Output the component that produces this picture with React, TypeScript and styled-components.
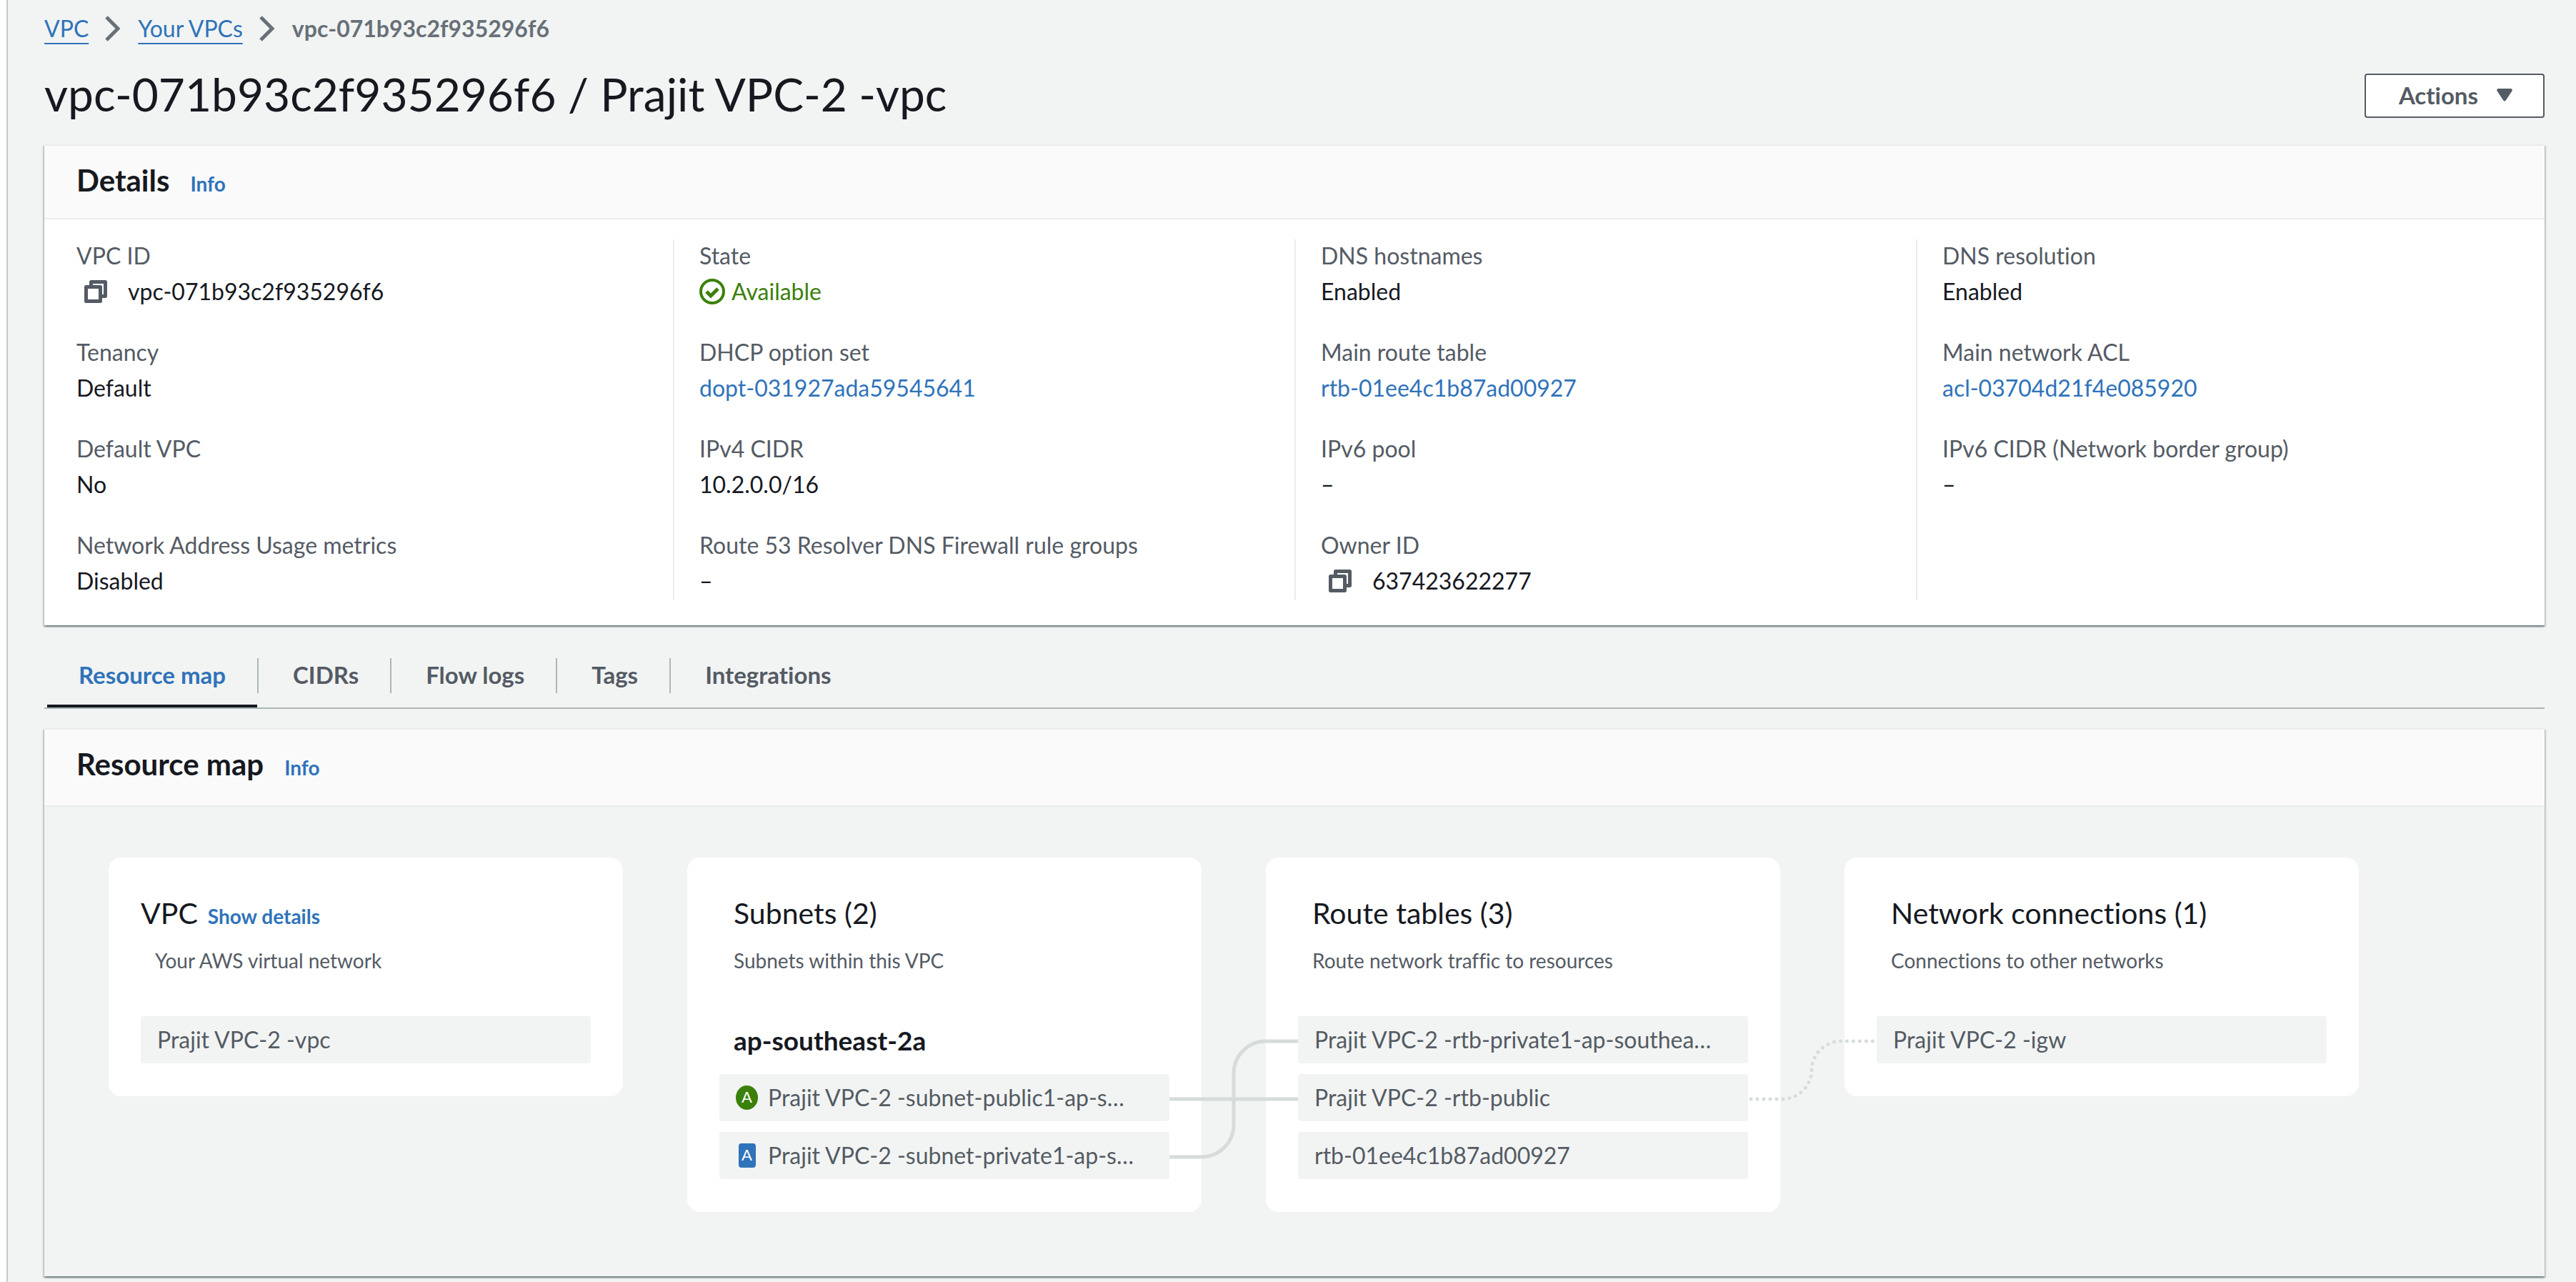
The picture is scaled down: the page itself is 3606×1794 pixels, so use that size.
import React from "react";
import styled, { createGlobalStyle } from "styled-components";

const color = {
  page: "#f2f4f3",
  white: "#ffffff",
  header: "#fafafa",
  divider: "#e9edec",
  rule: "#aab7b7",
  ink: "#16191f",
  muted: "#545b64",
  crumb: "#687078",
  link: "#2f73ba",
  green: "#3b800a",
  wire: "#d6dcdb",
};

const GlobalStyle = createGlobalStyle`
  *, *::before, *::after { box-sizing: border-box; }
  body {
    margin: 0;
    background: ${color.page};
    color: ${color.ink};
    font-family: Lato, "Noto Sans", sans-serif;
    font-size: 32px;
    line-height: 46px;
    font-variant-ligatures: none;
  }
  h1, h2, h3, h4, p, ul, ol, dl, dd { margin: 0; padding: 0; }
  ul, ol { list-style: none; }
  button { font: inherit; cursor: pointer; }
`;

/* ---------- shell ---------- */

const Shell = styled.div`
  display: flex;
  min-height: 100vh;
`;

const DrawerEdge = styled.div`
  flex: 0 0 11px;
  background: ${color.white};
  border-right: 2px solid #c3cbcb;
`;

const Main = styled.main`
  flex: 1;
  min-width: 0;
  padding: 15px 44px 7px 51px;
`;

const Link = styled.a`
  color: ${color.link};
  text-decoration: none;
`;

/* ---------- breadcrumbs and title ---------- */

const Crumbs = styled.ol`
  display: flex;
  align-items: center;
  line-height: 50px;
`;

const Crumb = styled.li`
  display: flex;
  align-items: center;
`;

const CrumbLink = styled(Link)`
  text-decoration: underline;
  text-decoration-thickness: 2px;
  text-underline-offset: 8px;
  text-decoration-skip-ink: none;
`;

const CurrentCrumb = styled.span`
  color: ${color.crumb};
  font-weight: 700;
`;

const Chevron = styled.svg`
  width: 22px;
  height: 36px;
  margin: 0 25px 0 22px;
  fill: none;
  stroke: ${color.crumb};
  stroke-width: 5;
`;

const TitleRow = styled.header`
  display: flex;
  align-items: flex-end;
  justify-content: space-between;
  margin: 34px 0 37px;
`;

const PageTitle = styled.h1`
  font-size: 64px;
  line-height: 66px;
  font-weight: 400;
`;

const ActionsButton = styled.button`
  display: flex;
  align-items: center;
  gap: 26px;
  height: 62px;
  padding: 0 43px 2px 46px;
  border: 2px solid ${color.muted};
  border-radius: 4px;
  background: ${color.white};
  color: ${color.muted};
  font-size: 33px;
  font-weight: 700;
`;

const Caret = styled.svg`
  width: 22px;
  height: 18px;
  fill: ${color.muted};
`;

/* ---------- panels ---------- */

const Panel = styled.section`
  border-top: 2px solid ${color.divider};
  box-shadow: 0 2px 2px rgba(0, 28, 36, 0.4), 2px 2px 2px rgba(0, 28, 36, 0.15),
    -2px 2px 2px rgba(0, 28, 36, 0.15);
`;

const PanelHeader = styled.div<{ $tall?: boolean }>`
  display: flex;
  align-items: baseline;
  gap: 29px;
  padding: 22px 45px ${(p) => (p.$tall ? 32 : 27)}px;
  border-bottom: 2px solid ${color.divider};
  background: ${color.header};
`;

const PanelTitle = styled.h2`
  font-size: 42px;
  line-height: 52px;
  font-weight: 700;
`;

const SmallLink = styled(Link)`
  font-size: 28px;
  line-height: 36px;
  font-weight: 700;
`;

/* ---------- details ---------- */

const DetailsGrid = styled.div`
  display: grid;
  grid-template-columns: repeat(4, 1fr);
  padding: 28px 10px 36px;
  background: ${color.white};
`;

const DetailsColumn = styled.dl`
  display: flex;
  flex-direction: column;
  gap: 39px;
  padding: 0 35px 3px;

  & + & {
    border-left: 2px solid ${color.divider};
  }
`;

const Term = styled.dt`
  margin-bottom: 4px;
  color: ${color.muted};
`;

const Value = styled.dd`
  display: flex;
  align-items: center;
  height: 46px;
`;

const CopyButton = styled.button`
  display: flex;
  margin: 0 29px 0 11px;
  padding: 0;
  border: 0;
  background: none;
`;

const CopySvg = styled.svg`
  width: 32px;
  height: 32px;
  fill: none;
  stroke: ${color.muted};
  stroke-width: 5;
  stroke-linejoin: round;
`;

const Status = styled.span`
  display: flex;
  align-items: center;
  gap: 9px;
  color: ${color.green};
`;

const StatusSvg = styled.svg`
  width: 36px;
  height: 36px;
  fill: none;
  stroke: ${color.green};
`;

/* ---------- tabs ---------- */

const TabList = styled.div`
  display: flex;
  margin: 46px 0 27px;
  padding-left: 4px;
  border-bottom: 2px solid ${color.rule};
`;

const TabLabel = styled.span`
  display: block;
  padding: 0 44px 3px;
`;

const Tab = styled.button<{ $active?: boolean }>`
  padding: 0 0 16px;
  border: 0;
  border-bottom: 4px solid ${(p) => (p.$active ? color.ink : "transparent")};
  background: none;
  color: ${(p) => (p.$active ? color.link : color.muted)};
  font-size: 33px;
  font-weight: 700;

  &:not(:first-child) ${TabLabel} {
    padding-left: 48px;
    border-left: 2px solid ${color.rule};
  }
`;

/* ---------- resource map ---------- */

const MapCanvas = styled.div`
  padding: 71px 90px 90px;
`;

const Board = styled.div`
  position: relative;
  display: flex;
  align-items: flex-start;
  gap: 90px;
`;

const Wires = styled.svg`
  position: absolute;
  top: 0;
  left: 0;
  width: 3150px;
  height: 496px;
  pointer-events: none;
  fill: none;
  stroke: ${color.wire};
  stroke-width: 5;
`;

const Card = styled.article`
  flex: 0 0 720px;
  min-width: 0;
  padding: 53px 45px 46px;
  border-radius: 18px;
  background: ${color.white};
`;

const CardHead = styled.div<{ $inset?: boolean }>`
  display: flex;
  align-items: baseline;
  gap: 14px;
  padding-left: ${(p) => (p.$inset ? 20 : 0)}px;
`;

const CardTitle = styled.h3`
  font-size: 41px;
  line-height: 50px;
  font-weight: 400;
`;

const CardNote = styled.p`
  margin: 18px 0 55px;
  padding-left: 20px;
  color: ${color.muted};
  font-size: 28px;
`;

const Zone = styled.h4`
  padding: 9px 20px 22px;
  font-size: 37px;
  line-height: 50px;
  font-weight: 700;
`;

const Items = styled.ul`
  display: flex;
  flex-direction: column;
  gap: 15px;
`;

const Item = styled.li`
  display: flex;
  align-items: center;
  gap: 14px;
  height: 66px;
  padding: 0 23px;
  border-radius: 4px;
  background: ${color.page};
  color: ${color.muted};
  white-space: nowrap;
`;

const BadgeSlot = styled.span`
  display: flex;
  flex: 0 0 31px;
  justify-content: center;
`;

const Badge = styled.span<{ $kind: "public" | "private" }>`
  width: ${(p) => (p.$kind === "public" ? 31 : 24)}px;
  height: 34px;
  border-radius: ${(p) => (p.$kind === "public" ? "50%" : "4px")};
  background: ${(p) => (p.$kind === "public" ? color.green : color.link)};
  color: ${color.white};
  font-size: 22px;
  line-height: 32px;
  text-align: center;
`;

/* ---------- pieces ---------- */

const Separator = () => (
  <Chevron viewBox="0 0 22 36" aria-hidden="true">
    <path d="M3 2 L19 18 L3 34" />
  </Chevron>
);

const Copy = ({ label }: { label: string }) => (
  <CopyButton type="button" aria-label={label}>
    <CopySvg viewBox="0 0 32 32" aria-hidden="true">
      <rect x="2.5" y="9.5" width="20" height="20" />
      <path d="M9.5 9 V2.5 H29.5 V22.5 H23" />
    </CopySvg>
  </CopyButton>
);

const Available = () => (
  <Status>
    <StatusSvg viewBox="0 0 36 36" aria-hidden="true">
      <circle cx="18" cy="18" r="16" strokeWidth="4" />
      <path d="M10 18 L16 24 L26 14" strokeWidth="5" />
    </StatusSvg>
    Available
  </Status>
);

type Detail = { term: string; value: React.ReactNode };

const details: Detail[][] = [
  [
    {
      term: "VPC ID",
      value: (
        <>
          <Copy label="Copy VPC ID" />
          vpc-071b93c2f935296f6
        </>
      ),
    },
    { term: "Tenancy", value: "Default" },
    { term: "Default VPC", value: "No" },
    { term: "Network Address Usage metrics", value: "Disabled" },
  ],
  [
    { term: "State", value: <Available /> },
    { term: "DHCP option set", value: <Link href="#dopt">dopt-031927ada59545641</Link> },
    { term: "IPv4 CIDR", value: "10.2.0.0/16" },
    { term: "Route 53 Resolver DNS Firewall rule groups", value: "–" },
  ],
  [
    { term: "DNS hostnames", value: "Enabled" },
    { term: "Main route table", value: <Link href="#rtb">rtb-01ee4c1b87ad00927</Link> },
    { term: "IPv6 pool", value: "–" },
    {
      term: "Owner ID",
      value: (
        <>
          <Copy label="Copy owner ID" />
          637423622277
        </>
      ),
    },
  ],
  [
    { term: "DNS resolution", value: "Enabled" },
    { term: "Main network ACL", value: <Link href="#acl">acl-03704d21f4e085920</Link> },
    { term: "IPv6 CIDR (Network border group)", value: "–" },
  ],
];

const tabs = ["Resource map", "CIDRs", "Flow logs", "Tags", "Integrations"];

export default function App() {
  return (
    <>
      <GlobalStyle />
      <Shell>
        <DrawerEdge />
        <Main>
          <nav aria-label="Breadcrumbs">
            <Crumbs>
              <Crumb>
                <CrumbLink href="#vpc">VPC</CrumbLink>
                <Separator />
              </Crumb>
              <Crumb>
                <CrumbLink href="#vpcs">Your VPCs</CrumbLink>
                <Separator />
              </Crumb>
              <Crumb>
                <CurrentCrumb>vpc-071b93c2f935296f6</CurrentCrumb>
              </Crumb>
            </Crumbs>
          </nav>

          <TitleRow>
            <PageTitle>vpc-071b93c2f935296f6 / Prajit VPC-2 -vpc</PageTitle>
            <ActionsButton type="button">
              Actions
              <Caret viewBox="0 0 22 18" aria-hidden="true">
                <path d="M2 0 H20 Q23 1 21 4 L13 16 Q11 19 9 16 L1 4 Q-1 1 2 0 Z" />
              </Caret>
            </ActionsButton>
          </TitleRow>

          <Panel>
            <PanelHeader>
              <PanelTitle>Details</PanelTitle>
              <SmallLink href="#details-info">Info</SmallLink>
            </PanelHeader>
            <DetailsGrid>
              {details.map((column) => (
                <DetailsColumn key={column[0].term}>
                  {column.map((d) => (
                    <div key={d.term}>
                      <Term>{d.term}</Term>
                      <Value>{d.value}</Value>
                    </div>
                  ))}
                </DetailsColumn>
              ))}
            </DetailsGrid>
          </Panel>

          <TabList role="tablist">
            {tabs.map((name, i) => (
              <Tab key={name} type="button" role="tab" aria-selected={i === 0} $active={i === 0}>
                <TabLabel>{name}</TabLabel>
              </Tab>
            ))}
          </TabList>

          <Panel>
            <PanelHeader $tall>
              <PanelTitle>Resource map</PanelTitle>
              <SmallLink href="#map-info">Info</SmallLink>
            </PanelHeader>
            <MapCanvas>
              <Board>
                <Card>
                  <CardHead>
                    <CardTitle>VPC</CardTitle>
                    <SmallLink href="#show-details">Show details</SmallLink>
                  </CardHead>
                  <CardNote>Your AWS virtual network</CardNote>
                  <Items>
                    <Item>Prajit VPC-2 -vpc</Item>
                  </Items>
                </Card>

                <Card>
                  <CardHead $inset>
                    <CardTitle>Subnets (2)</CardTitle>
                  </CardHead>
                  <CardNote>Subnets within this VPC</CardNote>
                  <Zone>ap-southeast-2a</Zone>
                  <Items>
                    <Item>
                      <BadgeSlot>
                        <Badge $kind="public">A</Badge>
                      </BadgeSlot>
                      Prajit VPC-2 -subnet-public1-ap-s…
                    </Item>
                    <Item>
                      <BadgeSlot>
                        <Badge $kind="private">A</Badge>
                      </BadgeSlot>
                      Prajit VPC-2 -subnet-private1-ap-s…
                    </Item>
                  </Items>
                </Card>

                <Card>
                  <CardHead $inset>
                    <CardTitle>Route tables (3)</CardTitle>
                  </CardHead>
                  <CardNote>Route network traffic to resources</CardNote>
                  <Items>
                    <Item>Prajit VPC-2 -rtb-private1-ap-southea…</Item>
                    <Item>Prajit VPC-2 -rtb-public</Item>
                    <Item>rtb-01ee4c1b87ad00927</Item>
                  </Items>
                </Card>

                <Card>
                  <CardHead $inset>
                    <CardTitle>Network connections (1)</CardTitle>
                  </CardHead>
                  <CardNote>Connections to other networks</CardNote>
                  <Items>
                    <Item>Prajit VPC-2 -igw</Item>
                  </Items>
                </Card>

                <Wires viewBox="0 0 3150 496" aria-hidden="true">
                  <path d="M1485 338 H1665" />
                  <path d="M1485 419 H1530 A45 45 0 0 0 1575 374 V302 A45 45 0 0 1 1620 257 H1665" />
                  <path
                    d="M2299 338 H2343 A41 41 0 0 0 2384 297 A41 41 0 0 1 2425 257 H2475"
                    strokeDasharray="0 9"
                    strokeLinecap="round"
                  />
                </Wires>
              </Board>
            </MapCanvas>
          </Panel>
        </Main>
      </Shell>
    </>
  );
}
